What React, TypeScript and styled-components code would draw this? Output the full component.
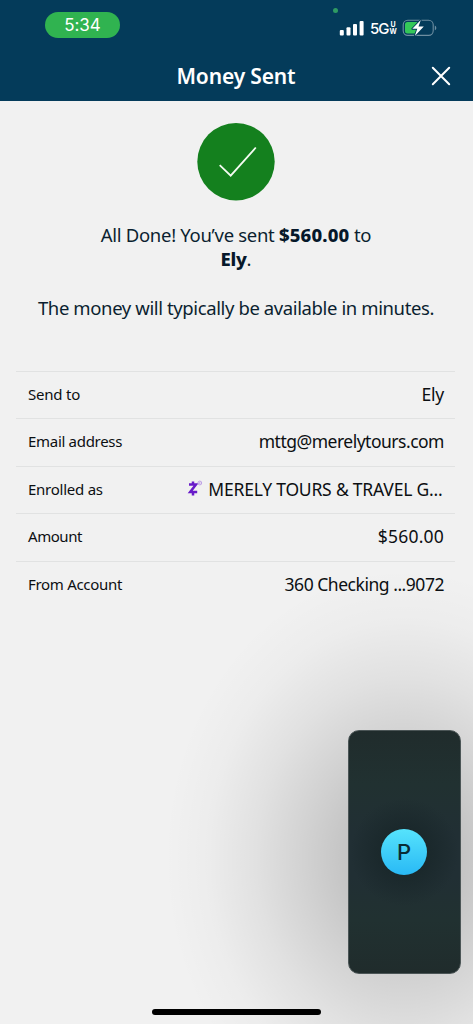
import React from "react";
import styled, { createGlobalStyle } from "styled-components";

const Global = createGlobalStyle`
  * { box-sizing: border-box; }
  body { margin: 0; background: #f1f1f1; }
`;

const Screen = styled.div`
  position: relative;
  display: flex;
  flex-direction: column;
  width: 473px;
  height: 1024px;
  overflow: hidden;
  background:
    radial-gradient(
      ellipse 240px 290px at 404px 858px,
      rgba(0, 0, 0, 0.24) 0%,
      rgba(0, 0, 0, 0.185) 25%,
      rgba(0, 0, 0, 0.125) 43%,
      rgba(0, 0, 0, 0.065) 62%,
      rgba(0, 0, 0, 0.02) 82%,
      rgba(0, 0, 0, 0) 100%
    ),
    #f1f1f1;
  color: #0c0f12;
  font-family: "Noto Sans", "Open Sans", sans-serif;
`;

const Header = styled.header`
  height: 101px;
  flex: none;
  background: #043b5a;
  color: #fff;
`;

const StatusBar = styled.div`
  display: flex;
  justify-content: space-between;
  align-items: flex-start;
  height: 50px;
  padding: 12px 36px 0 45px;
`;

const TimePill = styled.div`
  width: 75px;
  height: 26px;
  border-radius: 13px;
  background: #30b350;
  font: 400 17px/26px Inter, sans-serif;
  letter-spacing: -0.1px;
  text-align: center;
`;

const StatusIcons = styled.div`
  display: flex;
  align-items: center;
  height: 16px;
  margin-top: 8px;
`;

const Network = styled.div`
  display: flex;
  align-items: center;
  width: 27px;
  margin: 1px 5px 0 6px;
  font: 500 15px/16px Inter, sans-serif;
  letter-spacing: -1px;
`;

const NetworkSuffix = styled.span`
  display: flex;
  flex-direction: column;
  align-items: center;
  width: 7px;
  margin: -1px 0 0 1px;
  font: 700 7px/7px Inter, sans-serif;
  letter-spacing: 0;
`;

const CameraDot = styled.span`
  position: absolute;
  top: 8px;
  left: 333px;
  width: 5px;
  height: 5px;
  border-radius: 50%;
  background: #2f9a63;
`;

const TitleBar = styled.div`
  display: grid;
  grid-template-columns: 44px 1fr 44px;
  align-items: center;
  height: 51px;
  padding: 0 10px 0 9px;
`;

const Title = styled.h1`
  grid-column: 2;
  margin: 0;
  font-size: 21px;
  line-height: 28px;
  font-weight: 600;
  letter-spacing: -0.15px;
  text-align: center;
  white-space: nowrap;
`;

const CloseButton = styled.button`
  display: flex;
  justify-content: center;
  padding: 0;
  border: 0;
  background: none;
`;

const Confirmation = styled.section`
  display: flex;
  flex-direction: column;
  align-items: center;
  padding: 22px 1px 0 0;
  color: #0b1f30;
`;

const Message = styled.p<{ $top: number }>`
  margin: ${(p) => p.$top}px 0 0;
  font-size: 18.5px;
  line-height: 24.3px;
  text-align: center;
  white-space: nowrap;
`;

const Line = styled.span<{ $track?: number }>`
  display: block;
  letter-spacing: ${(p) => p.$track ?? 0}px;
`;

const Strong = styled.b<{ $track: number }>`
  color: #06182a;
  font-weight: 800;
  letter-spacing: ${(p) => p.$track}px;
`;

const Details = styled.dl`
  margin: 51px 18px 0 16px;
`;

const Row = styled.div`
  display: flex;
  align-items: center;
  justify-content: space-between;
  height: 47.5px;
  padding: 0 11px 3px 12px;
  border-top: 1px solid #e1e2e2;
  white-space: nowrap;
`;

const Label = styled.dt<{ $track: number }>`
  font-size: 15px;
  letter-spacing: ${(p) => p.$track}px;
`;

const Value = styled.dd<{ $track: number }>`
  display: flex;
  align-items: center;
  margin: 0;
  font-size: 17.5px;
  letter-spacing: ${(p) => p.$track}px;
`;

const Business = styled.span`
  margin: 0 1.5px 0 5px;
`;

const CallTile = styled.aside`
  position: absolute;
  left: 348px;
  top: 730px;
  display: flex;
  align-items: center;
  justify-content: center;
  width: 113px;
  height: 244px;
  border: 1px solid #4b5556;
  border-radius: 11px;
  background:
    radial-gradient(circle at 50% 50%, #1a282b 22px, rgba(26, 40, 43, 0) 54px),
    linear-gradient(#202c2c, #213131 22%, #212f34 42%, #212f34 60%, #213131 78%, #202c2c);
`;

const Avatar = styled.div`
  width: 46px;
  height: 46px;
  margin-right: 1px;
  border-radius: 50%;
  background: linear-gradient(#56e3fc, #29b9f5);
  color: #092b36;
  font: 500 22px/46px Inter, sans-serif;
  text-align: center;
`;

const HomeIndicator = styled.div`
  position: absolute;
  left: 152px;
  bottom: 9px;
  width: 169px;
  height: 6px;
  border-radius: 3px;
  background: #000;
`;

const Signal = () => (
  <svg width="25" height="16" viewBox="0 0 25 16" fill="#fff">
    <rect x="0.8" y="10" width="4" height="5.5" rx="1" />
    <rect x="7.5" y="7.2" width="4" height="8.3" rx="1" />
    <rect x="14" y="4" width="4" height="11.5" rx="1" />
    <rect x="20.6" y="1" width="4" height="14.5" rx="1" />
  </svg>
);

const Battery = () => (
  <svg width="35" height="18" viewBox="0 0 35 18">
    <rect x="1.2" y="1.2" width="30" height="15.2" rx="4.6" fill="none" stroke="#6e8ea1" strokeWidth="1.1" />
    <path d="M32.8 6.5c2 .8 2 4 0 4.8z" fill="#6e8ea1" />
    <path d="M5.500 3.100H16V14.500H5.500a2.500 2.500 0 0 1-2.500-2.500V5.600A2.500 2.500 0 0 1 5.500 3.100z" fill="#34c759" />
    <path d="M18.8 1 10.3 9.800h5l-2.500 7.200 9-9.400h-5.300z" fill="#fff" stroke="#043b5a" strokeWidth="1.8" paintOrder="stroke" strokeLinejoin="round" />
  </svg>
);

const ZelleMark = () => (
  <svg width="16" height="18" viewBox="0 0 16 18">
    <path d="M2 4.500h7L3.200 12.100h7M6 1.600v2.900M6 12.100v3.400" fill="none" stroke="#681bc9" strokeWidth="2.500" />
    <circle cx="12.800" cy="3" r="1.900" fill="none" stroke="#b897e4" strokeWidth="0.900" />
    <circle cx="12.800" cy="3" r="0.800" fill="#b591e3" />
  </svg>
);

export default function App() {
  return (
    <Screen>
      <Global />
      <Header>
        <StatusBar>
          <TimePill>5:34</TimePill>
          <StatusIcons>
            <Signal />
            <Network>
              5G
              <NetworkSuffix>
                <span>U</span>
                <span>W</span>
              </NetworkSuffix>
            </Network>
            <Battery />
          </StatusIcons>
        </StatusBar>
        <CameraDot />
        <TitleBar>
          <Title>Money Sent</Title>
          <CloseButton aria-label="Close">
            <svg width="20" height="20" viewBox="0 0 20 20" stroke="#fff" strokeWidth="2" strokeLinecap="round">
              <path d="M1.8 1.8 18.2 18.2M18.2 1.8 1.8 18.2" />
            </svg>
          </CloseButton>
        </TitleBar>
      </Header>
      <Confirmation>
        <svg width="78" height="78" viewBox="0 0 78 78">
          <circle cx="39" cy="38.7" r="38.7" fill="#14801e" />
          <path d="M22.700 42.200 33.700 52.700 58.800 24.500" fill="none" stroke="#f4fbf2" strokeWidth="1.8" />
        </svg>
        <Message $top={22}>
          <Line $track={-0.3}>
            All Done! You’ve sent <Strong $track={0.15}>$560.00</Strong> to
          </Line>
          <Line>
            <Strong $track={-0.3}>Ely</Strong>.
          </Line>
        </Message>
        <Message $top={24}>
          <Line $track={-0.39}>The money will typically be available in minutes.</Line>
        </Message>
      </Confirmation>
      <Details>
        <Row>
          <Label $track={-0.2}>Send to</Label>
          <Value $track={-0.2}>Ely</Value>
        </Row>
        <Row>
          <Label $track={-0.3}>Email address</Label>
          <Value $track={-0.5}>mttg@merelytours.com</Value>
        </Row>
        <Row>
          <Label $track={-0.25}>Enrolled as</Label>
          <Value $track={-0.2}>
            <ZelleMark />
            <Business>MERELY TOURS &amp; TRAVEL G...</Business>
          </Value>
        </Row>
        <Row>
          <Label $track={-0.45}>Amount</Label>
          <Value $track={0.2}>$560.00</Value>
        </Row>
        <Row>
          <Label $track={-0.3}>From Account</Label>
          <Value $track={-0.47}>360 Checking ...9072</Value>
        </Row>
      </Details>
      <CallTile>
        <Avatar>P</Avatar>
      </CallTile>
      <HomeIndicator />
    </Screen>
  );
}
